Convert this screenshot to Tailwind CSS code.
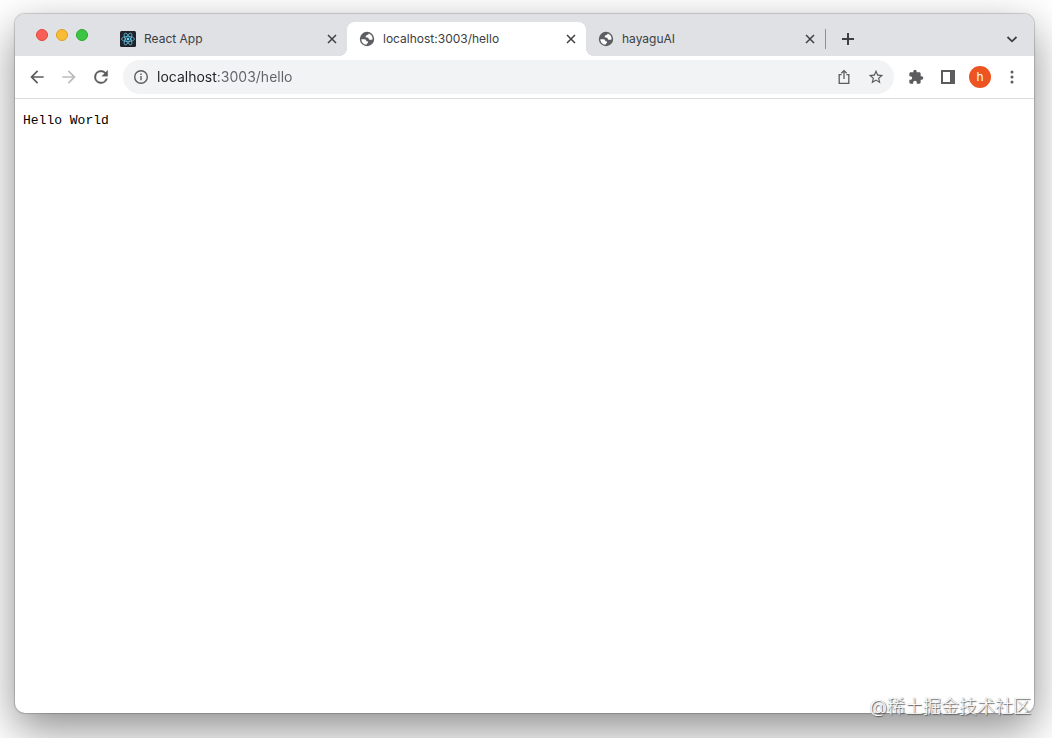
<!DOCTYPE html>
<html lang="en">

<head>
    <meta charset="UTF-8">
    <meta name="viewport" content="width=device-width, initial-scale=1.0">
    <title>localhost:3003/hello</title>
    <script src="https://cdn.jsdelivr.net/npm/@tailwindcss/browser@4"></script>
</head>

<body class="flex min-h-screen overflow-hidden bg-white pt-[14px] pr-[18px] pb-[25px] pl-[15px] font-['Inter','Noto_Sans_CJK_SC',sans-serif]">
    <svg class="hidden">
        <symbol id="globe" viewBox="0 0 16 16">
            <circle cx="8" cy="8" r="7.200" fill="currentColor" />
            <path fill="#fff" d="M9.800 2.600C9.600 4 8.500 4.100 7.300 4.400 6.400 4.700 6.400 6.300 7.500 6.400 9 6.500 9.500 6.700 9.700 7.800 9.900 8.900 11 9 12 8.800L13.600 8.600C13.800 5.600 12.300 3.500 9.800 2.600z" />
            <path fill="#fff" d="M2.300 8.200L5.600 8.300C7 8.500 7.300 9.300 7.400 10.200 8.600 10.200 9.200 10.600 9.100 11.500 8.900 12.300 7.700 12.200 7.600 13.700 4.600 13.600 2.400 11.300 2.300 8.200z" />
        </symbol>
        <symbol id="close" viewBox="0 0 16 16">
            <path fill="none" stroke="currentColor" stroke-width="1.500" d="M4 4l8 8M12 4l-8 8" />
        </symbol>
    </svg>

    <div class="relative flex flex-1 flex-col rounded-[10px] bg-white shadow-[0_0_1px_1px_rgba(0,0,0,0.18),0_16px_44px_rgba(0,0,0,0.45)]">
        <!-- Tab strip -->
        <header class="flex h-[42px] items-center rounded-t-[10px] bg-[#dfe1e5] pl-[21px] text-xs text-[#3c4043]">
            <div class="flex gap-2">
                <button aria-label="Close window" class="size-3 rounded-full border border-[#e0483e] bg-[#f95e57]"></button>
                <button aria-label="Minimize window" class="size-3 rounded-full border border-[#dfa023] bg-[#f8bc35]"></button>
                <button aria-label="Zoom window" class="size-3 rounded-full border border-[#2aa82f] bg-[#3ac544]"></button>
            </div>

            <div role="tablist" class="ml-5 flex min-w-0 flex-1 self-end">
                <div role="tab" class="flex h-[34px] max-w-[239px] min-w-0 flex-1 items-center gap-2 pr-[7px] pl-3">
                    <svg class="size-4 shrink-0" viewBox="0 0 16 16">
                        <rect width="16" height="16" rx="1.500" fill="#20232a" />
                        <g fill="none" stroke="#61bfe0" stroke-width=".8">
                            <ellipse cx="8" cy="8" rx="6.500" ry="2.500" />
                            <ellipse cx="8" cy="8" rx="6.500" ry="2.500" transform="rotate(60 8 8)" />
                            <ellipse cx="8" cy="8" rx="6.500" ry="2.500" transform="rotate(120 8 8)" />
                        </g>
                        <circle cx="8" cy="8" r="1.300" fill="#61dafb" />
                    </svg>
                    <span class="flex-1 truncate">React App</span>
                    <button aria-label="Close tab"><svg class="size-4"><use href="#close" /></svg></button>
                </div>
                <div role="tab" aria-selected="true" class="relative flex h-[34px] max-w-[239px] min-w-0 flex-1 items-center gap-2 rounded-t-lg bg-white pr-[7px] pl-3 before:absolute before:bottom-0 before:-left-2 before:size-2 before:bg-[radial-gradient(circle_at_0_0,transparent_8px,#fff_8px)] after:absolute after:-right-2 after:bottom-0 after:size-2 after:bg-[radial-gradient(circle_at_100%_0,transparent_8px,#fff_8px)]">
                    <svg class="size-4 shrink-0 text-[#5c5e61]"><use href="#globe" /></svg>
                    <span class="flex-1 truncate">localhost:3003/hello</span>
                    <button aria-label="Close tab"><svg class="size-4"><use href="#close" /></svg></button>
                </div>
                <div role="tab" class="flex h-[34px] max-w-[239px] min-w-0 flex-1 items-center gap-2 pr-[7px] pl-3">
                    <svg class="size-4 shrink-0 text-[#5c5e61]"><use href="#globe" /></svg>
                    <span class="flex-1 truncate">hayaguAI</span>
                    <button aria-label="Close tab"><svg class="size-4"><use href="#close" /></svg></button>
                </div>
                <div class="my-auto h-5 w-px bg-[#8d9095]"></div>
                <button aria-label="New tab" class="ml-3.5">
                    <svg class="size-4" viewBox="0 0 16 16" fill="none" stroke="currentColor" stroke-width="2"><path d="M8 2v12M2 8h12" /></svg>
                </button>
            </div>

            <button aria-label="Search tabs" class="mr-3.5 h-[34px] self-end">
                <svg class="size-4" viewBox="0 0 16 16" fill="none" stroke="currentColor" stroke-width="1.800"><path d="M3.500 6L8 10.300 12.500 6" /></svg>
            </button>
        </header>

        <!-- Toolbar -->
        <nav class="flex h-[43px] items-center gap-1.5 border-b border-[#dadce0] px-1.5 text-[#5c5c5e]">
            <div class="flex">
                <button aria-label="Back" class="flex w-8 justify-center">
                    <svg class="size-5" viewBox="0 0 24 24" fill="currentColor"><path d="M20 11H7.830l5.590-5.590L12 4l-8 8 8 8 1.410-1.410L7.830 13H20v-2z" /></svg>
                </button>
                <button aria-label="Forward" class="flex w-8 justify-center text-[#babcbe]" disabled>
                    <svg class="size-5" viewBox="0 0 24 24" fill="currentColor"><path d="M12 4l-1.410 1.410L16.170 11H4v2h12.170l-5.580 5.590L12 20l8-8z" /></svg>
                </button>
                <button aria-label="Reload" class="flex w-8 justify-center">
                    <svg class="size-5" viewBox="0 0 24 24" fill="currentColor" stroke="currentColor" stroke-width=".4"><path d="M17.650 6.350A7.960 7.960 0 0 0 12 4a8 8 0 1 0 7.730 10h-2.080A6 6 0 1 1 12 6c1.660 0 3.140.690 4.220 1.780L13 11h7V4l-2.350 2.350z" /></svg>
                </button>
            </div>

            <form class="flex h-[34px] min-w-0 flex-1 items-center rounded-full bg-[#f1f3f4] pr-0.5 pl-2.5">
                <svg class="size-4 shrink-0" viewBox="0 0 16 16" fill="none" stroke="currentColor" stroke-width="1.400"><circle cx="8" cy="8" r="6.300" /><path d="M8 7v4.300M8 4.500v1.500" /></svg>
                <input type="text" aria-label="Address" value="localhost:3003/hello" class="ml-2 min-w-0 flex-1 bg-[linear-gradient(90deg,#202124_61px,#5f6368_61px)] bg-clip-text text-sm text-transparent outline-none">
                <button type="button" aria-label="Share" class="flex w-8 justify-center">
                    <svg class="size-4" viewBox="0 0 16 16" fill="none" stroke="currentColor" stroke-width="1.300"><path d="M5.500 5.700H3.200v8.600h9.600V5.700h-2.300M8 10V1.800M5.300 4.300L8 1.600l2.700 2.700" /></svg>
                </button>
                <button type="button" aria-label="Bookmark" class="flex w-8 justify-center">
                    <svg class="size-4" viewBox="1 1 22 22" fill="currentColor"><path d="M22 9.240l-7.190-.620L12 2 9.190 8.630 2 9.240l5.460 4.730L5.820 21 12 17.270 18.180 21l-1.630-7.030L22 9.240zM12 15.400l-3.760 2.270 1-4.280-3.320-2.880 4.380-.380L12 6.100l1.710 4.040 4.380.380-3.320 2.880 1 4.280L12 15.400z" /></svg>
                </button>
            </form>

            <div class="flex items-center">
                <button aria-label="Extensions" class="flex w-8 justify-center">
                    <svg class="size-4" viewBox="0 0 24 24" fill="currentColor"><path d="M20.500 11H19V7c0-1.100-.900-2-2-2h-4V3.500a2.500 2.500 0 0 0-5 0V5H4c-1.100 0-1.990.900-1.990 2v3.800H3.500c1.490 0 2.700 1.210 2.700 2.700s-1.210 2.700-2.700 2.700H2V20c0 1.100.900 2 2 2h3.800v-1.500c0-1.490 1.210-2.700 2.700-2.700s2.700 1.210 2.700 2.700V22H17c1.100 0 2-.900 2-2v-4h1.500a2.500 2.500 0 0 0 0-5z" /></svg>
                </button>
                <button aria-label="Side panel" class="flex w-8 justify-center">
                    <svg class="size-4" viewBox="0 0 16 16" fill="currentColor"><path fill-rule="evenodd" d="M1 1h14v14H1zM3 3v10h7V3z" /></svg>
                </button>
                <button aria-label="Profile" class="flex w-8 justify-center">
                    <span class="flex size-[22px] items-center justify-center rounded-full bg-[#ee5322] text-xs text-white">h</span>
                </button>
                <button aria-label="Menu" class="flex w-8 justify-center">
                    <svg class="size-4" viewBox="0 0 16 16" fill="currentColor"><circle cx="8" cy="3" r="1.500" /><circle cx="8" cy="8" r="1.500" /><circle cx="8" cy="13" r="1.500" /></svg>
                </button>
            </div>
        </nav>

        <!-- Page -->
        <main class="flex-1 p-2 pt-3.5">
            <pre class="font-['Liberation_Mono',monospace] text-[13px] leading-4 text-black">Hello World</pre>
        </main>

        <p class="absolute right-[3px] -bottom-1.5 text-lg leading-6 font-light text-white [text-shadow:1px_1px_1px_#555,0_0_1px_#aaa]">@稀土掘金技术社区</p>
    </div>
</body>

</html>
